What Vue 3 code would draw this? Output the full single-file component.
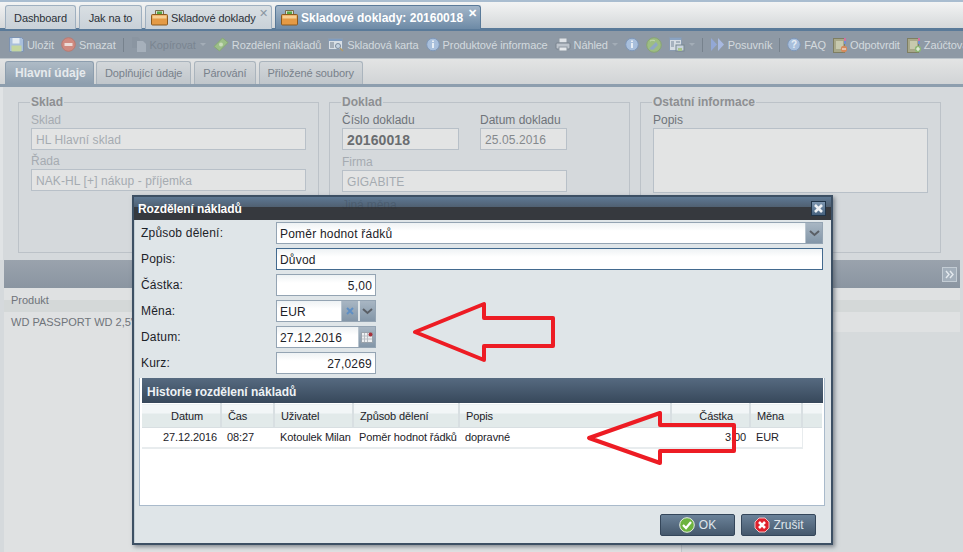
<template>
  <div class="page">
    <div class="maintabs">
      <div class="mtab w-dash">Dashboard</div>
      <div class="mtab w-jak">Jak na to</div>
      <div class="mtab with-icon w-skl">
        <svg class="bag" width="17" height="17" viewBox="0 0 17 17"><path d="M4.500 6V1.500h8V6" fill="#d6ddd2" stroke="#7c6a4a"/><rect x="6" y="2.500" width="5" height="3.500" fill="#58a845"/><rect x="0.500" y="5.500" width="16" height="10.500" rx="1" fill="#e49a45" stroke="#8a5a20"/><rect x="1.500" y="6.500" width="14" height="3" fill="#f6cf94"/></svg>
        Skladové doklady
        <span class="tabclose">✕</span>
      </div>
      <div class="mtab active with-icon">
        <svg class="bag" width="17" height="17" viewBox="0 0 17 17"><path d="M4.500 6V1.500h8V6" fill="#d6ddd2" stroke="#7c6a4a"/><rect x="6" y="2.500" width="5" height="3.500" fill="#58a845"/><rect x="0.500" y="5.500" width="16" height="10.500" rx="1" fill="#e49a45" stroke="#8a5a20"/><rect x="1.500" y="6.500" width="14" height="3" fill="#f6cf94"/></svg>
        Skladové doklady: 20160018
        <span class="tabclose">✕</span>
      </div>
    </div>

    <div class="toolbar">
      <div class="tool" style="margin-left:9px">
        <svg width="15" height="15" viewBox="0 0 15 15"><path d="M.5.5h12l2 2v12H.5z" fill="#a9bfdc" stroke="#7d93b2"/><rect x="3.500" y="1" width="7" height="5.500" fill="#e4ebf2"/><rect x="2.500" y="8.500" width="10" height="6" fill="#c4d6a0"/></svg>
        <span>Uložit</span>
      </div>
      <div class="tool">
        <svg width="15" height="15" viewBox="0 0 15 15"><circle cx="7.500" cy="7.500" r="6.800" fill="#cf8a80" stroke="#b97a72"/><rect x="3.500" y="6" width="8" height="3" fill="#ecdcd8"/></svg>
        <span>Smazat</span>
      </div>
      <i class="sep"></i>
      <div class="tool off">
        <svg width="16" height="15" viewBox="0 0 16 15"><path d="M1 0h6l2 2v9H1z" fill="#8a95a1"/><path d="M6 4h6l3 3v8H6z" fill="#a6b0bb"/></svg>
        <span>Kopírovat</span><b class="caret"></b>
      </div>
      <div class="tool">
        <svg width="16" height="15" viewBox="0 0 16 15"><path d="M1 9.500 9.500 1l5.500 4.500L6.500 14z" fill="#9cbf88" stroke="#86a876"/><circle cx="8" cy="7.500" r="2" fill="#c9dcba"/></svg>
        <span>Rozdělení nákladů</span>
      </div>
      <div class="tool">
        <svg width="16" height="15" viewBox="0 0 16 15"><rect x="0.500" y="1.500" width="14" height="11" fill="#d8dfe6" stroke="#8c9cae"/><rect x="1" y="2" width="13" height="2" fill="#7f9cc0"/><path d="M2 6h4M2 8h4M2 10h4" stroke="#6e7c8c"/><circle cx="10" cy="9" r="2.500" fill="#c3d2e2" stroke="#7a8a9c"/><path d="M12 11l3 3" stroke="#b09a6a" stroke-width="1.500"/></svg>
        <span>Skladová karta</span>
      </div>
      <div class="tool">
        <svg width="14" height="15" viewBox="0 0 14 15"><circle cx="7" cy="7.500" r="6.300" fill="#a8bfdc" stroke="#7e97b8"/><rect x="6" y="6" width="2" height="5" fill="#e6edf4"/><rect x="6" y="3.500" width="2" height="1.500" fill="#e6edf4"/></svg>
        <span>Produktové informace</span>
      </div>
      <div class="tool">
        <svg width="16" height="15" viewBox="0 0 16 15"><rect x="4" y="1" width="8" height="5" fill="#dfe3e7" stroke="#8d97a2"/><rect x="1" y="6" width="14" height="6" rx="1" fill="#bcc3cb" stroke="#78828d"/><rect x="4" y="10" width="8" height="4" fill="#e6e9ec" stroke="#8d97a2"/></svg>
        <span>Náhled</span><b class="caret"></b>
      </div>
      <div class="tool only">
        <svg width="14" height="15" viewBox="0 0 14 15"><circle cx="7" cy="7.500" r="6.300" fill="#a8bfdc" stroke="#7e97b8"/><rect x="6" y="6" width="2" height="5" fill="#e6edf4"/><rect x="6" y="3.500" width="2" height="1.500" fill="#e6edf4"/></svg>
      </div>
      <div class="tool only">
        <svg width="16" height="16" viewBox="0 0 16 16"><circle cx="8" cy="8" r="7.300" fill="#9dbd82" stroke="#88a474"/><path d="M3 12 10 5l2 3-5 5z" fill="#8fa7c4"/><path d="M4 4c2-1 4-1 5 0" stroke="#c4d8b0" fill="none"/></svg>
      </div>
      <div class="tool only">
        <svg width="16" height="15" viewBox="0 0 16 15"><rect x="0.500" y="0.500" width="12" height="13" fill="#d5dce3" stroke="#8a9bb0"/><rect x="1" y="1" width="11" height="2" fill="#8aa3c2"/><path d="M2 5h3M2 7h3M2 9h3M7 5h4" stroke="#77879a"/><rect x="7" y="8" width="8" height="6" fill="#c8d2dc" stroke="#76868f"/><rect x="9" y="11" width="4" height="3" fill="#a8c48c"/></svg>
        <b class="caret"></b>
      </div>
      <i class="sep"></i>
      <div class="tool">
        <svg width="15" height="15" viewBox="0 0 15 15"><path d="M1 1l6 6.500L1 14z" fill="#93a8d6"/><path d="M8 1l6 6.500L8 14z" fill="#a8b9e0"/></svg>
        <span>Posuvník</span>
      </div>
      <i class="sep"></i>
      <div class="tool">
        <svg width="14" height="15" viewBox="0 0 14 15"><circle cx="7" cy="7.500" r="6.300" fill="#a8bfdc" stroke="#7e97b8"/><text x="7" y="11" text-anchor="middle" font-size="10" font-weight="700" font-family="Liberation Sans, sans-serif" fill="#e6edf4">?</text></svg>
        <span>FAQ</span>
      </div>
      <div class="tool">
        <svg width="14" height="16" viewBox="0 0 14 16"><rect x="0.500" y="1.500" width="11" height="14" fill="#a8a88a" stroke="#7e7e62"/><rect x="3" y="4" width="7" height="8" fill="#c7c9ae"/><path d="M12 1v3" stroke="#d070a0" stroke-width="2"/><path d="M12 4v3" stroke="#7090d0" stroke-width="2"/><circle cx="11" cy="12" r="3.200" fill="#d48a5c"/><rect x="9" y="11.400" width="4" height="1.200" fill="#f0e4dc"/></svg>
        <span>Odpotvrdit</span>
      </div>
      <div class="tool">
        <svg width="14" height="16" viewBox="0 0 14 16"><rect x="0.500" y="1.500" width="11" height="14" fill="#a8a88a" stroke="#7e7e62"/><rect x="3" y="4" width="7" height="8" fill="#c7c9ae"/><path d="M12 1v3" stroke="#d070a0" stroke-width="2"/><path d="M12 4v3" stroke="#7090d0" stroke-width="2"/><circle cx="11" cy="12" r="3.200" fill="#8fb878"/><path d="M9 12h4M11 10v4" stroke="#f0f4ec" stroke-width="1.200"/></svg>
        <span>Zaúčtovat</span>
      </div>
    </div>

    <div class="subtabs">
      <div class="stab active">Hlavní údaje</div>
      <div class="stab">Doplňující údaje</div>
      <div class="stab">Párování</div>
      <div class="stab">Přiložené soubory</div>
    </div>

    <div class="content">
      <fieldset class="fs">
        <legend>Sklad</legend>
        <label>Sklad</label>
        <div class="dis">HL Hlavní sklad</div>
        <label>Řada</label>
        <div class="dis">NAK-HL [+] nákup - příjemka</div>
      </fieldset>
      <fieldset class="fs">
        <legend>Doklad</legend>
        <div class="pair">
          <div>
            <label class="dark">Číslo dokladu</label>
            <div class="dis strong">20160018</div>
          </div>
          <div>
            <label class="dark">Datum dokladu</label>
            <div class="dis date">25.05.2016</div>
          </div>
        </div>
        <label>Firma</label>
        <div class="dis firma">GIGABITE</div>
      </fieldset>
      <fieldset class="fs">
        <legend>Ostatní informace</legend>
        <label class="dark">Popis</label>
        <div class="dis area"></div>
      </fieldset>
    </div>

    <div class="lower">
      <div class="panelhead">
        <span class="expand">
          <svg width="10" height="9" viewBox="0 0 10 9"><path d="M1 1l3 3.500L1 8M5 1l3 3.500L5 8" fill="none" stroke="#e4e9ee" stroke-width="1.400"/></svg>
        </span>
      </div>
      <div class="lowerhead">Produkt</div>
      <div class="lowerrow">WD PASSPORT WD 2,5" l</div>
      <div class="lowerlines"></div>
    </div>

    <div class="modal">
      <div class="mtitle">
        <span>Rozdělení nákladů</span>
        <span class="ghost">Jiná měna</span>
        <span class="mclose">
          <svg width="11" height="11" viewBox="0 0 11 11"><path d="M2 2l7 7M9 2l-7 7" stroke="#eef2f6" stroke-width="2.600"/></svg>
        </span>
      </div>
      <div class="mbody">
        <div class="frow">
          <label>Způsob dělení:</label>
          <div class="inp wide">
            <span class="val">Poměr hodnot řádků</span>
            <span class="tbtn"><svg width="11" height="7" viewBox="0 0 11 7"><path d="M1 1l4.500 4L10 1" fill="none" stroke="#5a5f66" stroke-width="2"/></svg></span>
          </div>
        </div>
        <div class="frow">
          <label>Popis:</label>
          <div class="inp wide focus"><span class="val">Důvod</span></div>
        </div>
        <div class="frow">
          <label>Částka:</label>
          <div class="inp num"><span class="val right">5,00</span></div>
        </div>
        <div class="frow">
          <label>Měna:</label>
          <div class="inp num">
            <span class="val">EUR</span>
            <span class="tbtn"><svg width="10" height="10" viewBox="0 0 10 10"><path d="M2 2l6 6M8 2l-6 6" stroke="#5f8fc4" stroke-width="2"/></svg></span>
            <span class="tbtn split"><svg width="11" height="7" viewBox="0 0 11 7"><path d="M1 1l4.500 4L10 1" fill="none" stroke="#5a5f66" stroke-width="2"/></svg></span>
          </div>
        </div>
        <div class="frow">
          <label>Datum:</label>
          <div class="inp num">
            <span class="val">27.12.2016</span>
            <span class="tbtn"><svg width="13" height="13" viewBox="0 0 13 13"><rect x="0.500" y="1.500" width="11" height="10" fill="#eef0f2" stroke="#9aa3ac"/><path d="M3.500 2v9M6.500 2v9M1 5h10M1 8h10" stroke="#b8bec4"/><circle cx="9.500" cy="3.500" r="2" fill="#a8323c"/></svg></span>
          </div>
        </div>
        <div class="frow">
          <label>Kurz:</label>
          <div class="inp num"><span class="val right">27,0269</span></div>
        </div>

        <div class="history">
          <div class="hhead">Historie rozdělení nákladů</div>
          <table>
            <colgroup>
              <col v-for="w in colWidths" :key="w.id" :style="{ width: w.px + 'px' }" />
            </colgroup>
            <thead>
              <tr>
                <th class="c">Datum</th>
                <th>Čas</th>
                <th>Uživatel</th>
                <th>Způsob dělení</th>
                <th>Popis</th>
                <th class="r">Částka</th>
                <th>Měna</th>
                <th class="rest"></th>
              </tr>
            </thead>
            <tbody>
              <tr>
                <td class="r">27.12.2016</td>
                <td>08:27</td>
                <td>Kotoulek Milan</td>
                <td>Poměr hodnot řádků</td>
                <td>dopravné</td>
                <td class="r">3,00</td>
                <td>EUR</td>
                <td class="rest"></td>
              </tr>
            </tbody>
          </table>
        </div>

        <div class="mfoot">
          <button>
            <svg width="16" height="16" viewBox="0 0 16 16"><circle cx="8" cy="8" r="7.300" fill="#6cb33f" stroke="#e6eee0"/><path d="M4 8l3 3 5-6" fill="none" stroke="#fff" stroke-width="2.200"/></svg>
            OK
          </button>
          <button>
            <svg width="16" height="16" viewBox="0 0 16 16"><path d="M5 1h6l4 4v6l-4 4H5l-4-4V5z" fill="#e0202c" stroke="#f2c2c4"/><path d="M5 5l6 6M11 5l-6 6" stroke="#fff" stroke-width="2.600"/></svg>
            Zrušit
          </button>
        </div>
      </div>
    </div>

    <svg class="arrows" width="963" height="552" viewBox="0 0 963 552">
      <path d="M415 332 484 304V318H553V346H484V360Z" />
      <path d="M589 438 660 413V425H734V451H660V463Z" />
    </svg>
  </div>
</template>

<script setup>
const colWidths = [
  { id: 'datum', px: 79 },
  { id: 'cas', px: 53 },
  { id: 'uzivatel', px: 79 },
  { id: 'zpusob', px: 106 },
  { id: 'popis', px: 212 },
  { id: 'castka', px: 79 },
  { id: 'mena', px: 52 },
  { id: 'rest', px: 20 },
]
</script>

<style>
html, body { margin: 0; background: #fff; }
</style>

<style scoped>
.page {
  position: relative;
  width: 963px;
  height: 552px;
  overflow: hidden;
  font-family: "Liberation Sans", Arial, sans-serif;
  font-size: 11px;
  background: #d5d9dc;
  display: flex;
  flex-direction: column;
}

/* horni zalozky */
.maintabs {
  box-sizing: border-box;
  height: 31px;
  flex: none;
  padding: 4px 0 0 5px;
  display: flex;
  gap: 3px;
  background: linear-gradient(#f3f4f4, #d5d8da);
  border-top: 2px solid #a9bdd0;
  border-bottom: 3px solid #5a7a99;
}
.mtab {
  box-sizing: border-box;
  height: 24px;
  margin-top: -1px;
  padding: 0 9px;
  display: flex;
  align-items: center;
  color: #2b3138;
  background: linear-gradient(#d9dfe3, #c9d1d8);
  border: 1px solid #9fb0c0;
  border-bottom: none;
  border-radius: 3px 3px 0 0;
  position: relative;
  white-space: nowrap;
  letter-spacing: -0.1px;
}
.w-dash { width: 71px; justify-content: center; padding: 0; }
.w-jak { width: 63px; justify-content: center; padding: 0; }
.w-skl { width: 127px; }
.mtab.with-icon { padding-left: 5px; padding-right: 0; }
.bag { margin-right: 3px; flex: none; }
.mtab.active {
  width: 206px;
  font-size: 12px;
  letter-spacing: 0;
  color: #fff;
  font-weight: 700;
  background: linear-gradient(#a3b6c9, #6d8aa6);
  border-color: #5a7a99;
}
.tabclose {
  position: absolute;
  top: 2px;
  right: 3px;
  font-size: 11px;
  line-height: 11px;
  color: #8a97a3;
}
.active .tabclose { color: #fff; }

.toolbar {
  height: 27px;
  flex: none;
  display: flex;
  align-items: center;
  gap: 7px;
  background: #8e99a5;
  color: #d3d9de;
  letter-spacing: -0.1px;
  white-space: nowrap;
  overflow: hidden;
}
.tool {
  display: flex;
  align-items: center;
  gap: 3px;
  flex: none;
}
.tool svg { flex: none; }
.tool.off { color: #7a8591; }
.sep {
  width: 1px;
  height: 14px;
  background: #77828d;
  flex: none;
}
.caret {
  width: 0;
  height: 0;
  margin-left: 1px;
  border: 3px solid transparent;
  border-top-color: #a3adb7;
  border-bottom: none;
}

.subtabs {
  box-sizing: border-box;
  height: 29px;
  flex: none;
  padding: 2px 0 0 5px;
  display: flex;
  gap: 3px;
  background: linear-gradient(#e3e4e4, #d1d4d6);
  border-top: 1px solid #bcc4ca;
  border-bottom: 3px solid #8d9eae;
}
.stab {
  box-sizing: border-box;
  height: 23px;
  padding: 0 8px;
  display: flex;
  align-items: center;
  color: #78818b;
  letter-spacing: -0.1px;
  background: linear-gradient(#d3d7da, #c0c6cb);
  border: 1px solid #aab4bd;
  border-bottom: none;
  border-radius: 3px 3px 0 0;
}
.stab.active {
  width: 89px;
  margin-right: -1px;
  padding: 0 0 0 9px;
  font-size: 12px;
  font-weight: 700;
  letter-spacing: 0;
  color: #e6eaed;
  background: linear-gradient(#aebbc6, #8d9eae);
  border-color: #8d9eae;
}

.content {
  box-sizing: border-box;
  height: 173px;
  flex: none;
  display: flex;
  gap: 10px;
  padding: 8px 0 0 15px;
  border-left: 3px solid #e0e3e5;
  font-size: 12px;
}
.fs {
  box-sizing: border-box;
  width: 301px;
  height: 158px;
  margin: 0;
  padding: 0 12px;
  border: 1px solid #bcc2c8;
  color: #a5abb1;
}
.fs legend {
  margin-left: -1px;
  padding: 0 1px;
  font-weight: 700;
  color: #8d8f92;
}
.fs label {
  display: block;
  height: 16px;
  line-height: 16px;
  margin-top: 3px;
}
.fs label.dark { color: #6f747a; }
.dis {
  box-sizing: border-box;
  height: 22px;
  line-height: 23px;
  padding: 0 4px;
  margin-bottom: 1px;
  background: #e3e4e4;
  border: 1px solid #b8c0c8;
  color: #a5abb1;
  letter-spacing: 0.1px;
}
.pair { display: flex; gap: 21px; }
.strong {
  width: 117px;
  font-weight: 700;
  font-size: 14px;
  color: #6a6d70;
}
.date { width: 87px; color: #85898d; }
.firma { width: 225px; }
.area { height: 65px; }

.lower {
  flex: 1;
  display: flex;
  flex-direction: column;
  margin: 0 3px 0 4px;
  background: #d6dadc;
  position: relative;
  color: #6f747a;
}
.panelhead {
  box-sizing: border-box;
  flex: none;
  height: 28px;
  background: linear-gradient(#9aa3ad, #8a95a1);
  display: flex;
  align-items: center;
  justify-content: flex-end;
  padding-right: 3px;
}
.expand {
  box-sizing: border-box;
  width: 15px;
  height: 15px;
  background: #a3afbb;
  border: 1px solid #c3ccd4;
  display: flex;
  align-items: center;
  justify-content: center;
}
.lowerhead {
  height: 24px;
  line-height: 24px;
  padding-left: 7px;
  background: linear-gradient(#dfe1e2 50%, #d4d8d8 50%);
}
.lowerrow {
  height: 20px;
  line-height: 20px;
  padding-left: 7px;
  background: #dfe1e2;
  white-space: nowrap;
}
.lowerlines {
  flex: 1;
  width: 677px;
  border-right: 1px solid #c1c6ca;
  background: #dfe1e2;
}

/* modalni okno */
.modal {
  position: absolute;
  left: 132px;
  top: 195px;
  width: 701px;
  height: 350px;
  box-sizing: border-box;
  border: 2px solid #3d5064;
  background: #dfe5e8;
  box-shadow: 2px 2px 4px rgba(60, 70, 80, 0.55);
  color: #1c2228;
  font-size: 12px;
}
.mtitle {
  position: relative;
  height: 23px;
  display: flex;
  align-items: center;
  justify-content: space-between;
  padding: 0 5px 0 4px;
  color: #fff;
  font-weight: 700;
  letter-spacing: -0.1px;
  background: linear-gradient(#5e7893 0, #4f5f70 45%, #36393e 45%, #36393e 100%);
}
.ghost {
  position: absolute;
  left: 208px;
  top: 1px;
  font-weight: 400;
  color: rgba(40, 50, 60, 0.22);
}
.mclose {
  box-sizing: border-box;
  width: 15px;
  height: 15px;
  background: linear-gradient(#7d96b0, #45617e);
  border: 1px solid #1f3347;
  display: flex;
  align-items: center;
  justify-content: center;
}
.mbody {
  box-sizing: border-box;
  height: 323px;
  padding: 2px 8px 0 6px;
  border-left: 1px solid #c4cfd6;
}
.frow {
  height: 26px;
  display: flex;
  align-items: flex-start;
}
.frow label {
  width: 135px;
  line-height: 23px;
  letter-spacing: 0.2px;
}
.inp {
  box-sizing: border-box;
  height: 22px;
  display: flex;
  background: linear-gradient(#eef2f4, #fff 40%);
  border: 1px solid #94a4b3;
}
.inp.wide { width: 547px; }
.inp.num { width: 100px; }
.inp.focus { border-color: #436a8f; }
.val {
  flex: 1;
  padding: 0 3px;
  line-height: 22px;
  letter-spacing: 0.2px;
}
.val.right { text-align: right; }
.tbtn {
  box-sizing: border-box;
  width: 17px;
  flex: none;
  display: flex;
  align-items: center;
  justify-content: center;
  background: linear-gradient(#a8b6c3, #8396a8);
  border-left: 1px solid #b9c5cf;
}
.tbtn.split { border-left: 2px solid #dfe5e8; }

.history {
  box-sizing: border-box;
  width: 686px;
  height: 128px;
  margin: 0 0 0 -2px;
  background: #fff;
  border: 1px solid #a9bacb;
  border-top: none;
  padding: 0 1px;
}
.hhead {
  height: 25px;
  line-height: 28px;
  margin: 0 0 0 1px;
  padding-left: 5px;
  color: #eef2f5;
  font-weight: 700;
  background: linear-gradient(#566a80, #37485b);
}
table {
  border-collapse: collapse;
  table-layout: fixed;
  width: 680px;
  margin-left: 1px;
  font-size: 11px;
  letter-spacing: -0.1px;
}
th {
  box-sizing: border-box;
  height: 24px;
  padding: 0 5px 0 6px;
  font-weight: 400;
  text-align: left;
  color: #1c2228;
  background: linear-gradient(#f2f6f7 40%, #e2eaea 40%);
  border-right: 2px solid #d8dfe2;
  border-top: 1px solid #fff;
  border-bottom: 1px solid #d8dfe2;
}
th.c { text-align: right; padding-right: 17px; }
th.r { text-align: right; padding-right: 16px; }
th.rest { border-right: none; }
td {
  box-sizing: border-box;
  height: 20px;
  padding: 0 5px 0 6px;
  border-bottom: 2px solid #e8ecee;
  white-space: nowrap;
}
td.r { text-align: right; padding-right: 4px; }
td.rest { border-bottom: none; border-left: 1px solid #e8ecee; }

.mfoot {
  display: flex;
  justify-content: flex-end;
  gap: 6px;
  padding: 8px 7px 0 0;
}
.mfoot button {
  box-sizing: border-box;
  width: 75px;
  height: 22px;
  padding: 0;
  display: flex;
  align-items: center;
  justify-content: center;
  gap: 4px;
  font-family: inherit;
  font-size: 12px;
  color: #dfe6ec;
  background: linear-gradient(#6b8299, #45586c);
  border: 1px solid #34465a;
  border-radius: 2px;
}

.arrows {
  position: absolute;
  left: 0;
  top: 0;
  pointer-events: none;
}
.arrows path {
  fill: none;
  stroke: #ed1c24;
  stroke-width: 4;
  stroke-linejoin: round;
}
</style>
